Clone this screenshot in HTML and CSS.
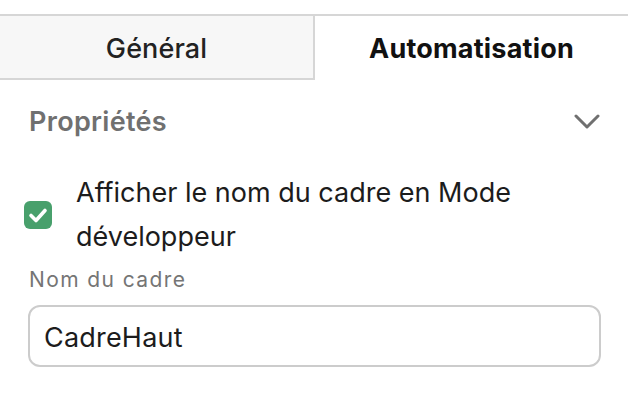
FILE: index.html
```html
<!DOCTYPE html>
<html lang="fr">
<head>
<meta charset="utf-8">
<link rel="stylesheet" href="styles.css">
</head>
<body>
<div class="tabs">
  <div class="tab tab-inactive">Général</div>
  <div class="tab tab-active">Automatisation</div>
</div>
<div class="panel">
  <div class="section-header">
    <span class="section-title">Propriétés</span>
    <svg class="chevron" width="26" height="16" viewBox="0 0 26 16"><path d="M2 2 L13 13 L24 2" fill="none" stroke="#707070" stroke-width="3" stroke-linecap="round" stroke-linejoin="round"/></svg>
  </div>
  <div class="check-row">
    <span class="checkbox">
      <svg width="28" height="28" viewBox="0 0 28 28"><path d="M7 14.5 L12 19.5 L21 9.5" fill="none" stroke="#fff" stroke-width="3.6" stroke-linecap="round" stroke-linejoin="round"/></svg>
    </span>
    <span class="check-label">Afficher le nom du cadre en Mode développeur</span>
  </div>
  <div class="field-label">Nom du cadre</div>
  <div class="input">CadreHaut</div>
</div>
</body>
</html>
```
FILE: styles.css
```css
html, body {
  margin: 0;
  padding: 0;
  background: #fff;
}
body {
  font-family: Inter, "Noto Sans", sans-serif;
  width: 628px;
  height: 400px;
  overflow: hidden;
}
.tabs {
  display: flex;
  margin-top: 14px;
  border-top: 2px solid #d6d6d6;
}
.tab {
  flex: 1;
  height: 64px;
  display: flex;
  align-items: center;
  justify-content: center;
  font-size: 27px;
  box-sizing: border-box;
}
.tab-inactive {
  background: #f7f7f7;
  border-right: 2px solid #d6d6d6;
  border-bottom: 2px solid #d6d6d6;
  font-weight: 500;
  color: #222;
  letter-spacing: 0.1px;
  padding-top: 2px;
}
.tab-active {
  font-weight: 700;
  color: #111;
  letter-spacing: 0.2px;
}
.panel {
  padding: 0 27px 0 28px;
}
.section-header {
  display: flex;
  align-items: center;
  justify-content: space-between;
  margin-top: 26px;
  height: 32px;
}
.section-title {
  font-size: 27px;
  font-weight: 600;
  color: #707070;
  line-height: 32px;
  margin-left: 1px;
  letter-spacing: 0.3px;
}
.chevron {
  margin-right: 1px;
  display: block;
}
.check-row {
  display: flex;
  align-items: center;
  margin-top: 33px;
  margin-left: -4px;
}
.checkbox {
  width: 28px;
  height: 28px;
  border-radius: 6px;
  background: #48a06c;
  flex: none;
  display: block;
}
.checkbox svg {
  display: block;
}
.check-label {
  margin-left: 24px;
  font-size: 27px;
  line-height: 44px;
  color: #1c1c1c;
}
.field-label {
  margin-top: 8px;
  font-size: 21px;
  line-height: 26px;
  color: #757575;
  margin-left: 1px;
  letter-spacing: 1.4px;
}
.input {
  margin-top: 12px;
  height: 62px;
  box-sizing: border-box;
  border: 2px solid #cccccc;
  border-radius: 12px;
  display: flex;
  align-items: center;
  padding: 3px 0 0 14px;
  font-size: 27px;
  color: #1c1c1c;
  letter-spacing: 0.2px;
}
```
